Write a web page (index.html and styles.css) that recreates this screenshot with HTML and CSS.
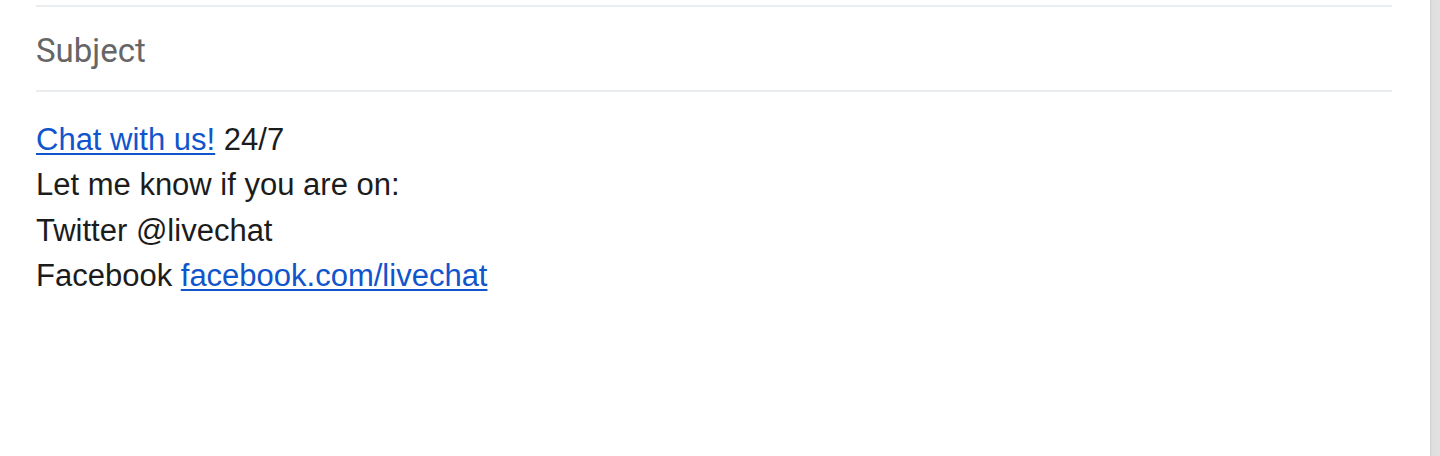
FILE: index.html
```html
<!DOCTYPE html>
<html lang="en">
<head>
	<meta charset="UTF-8">
	<title>Compose</title>
	<link rel="stylesheet" href="styles.css">
</head>
<body>
	<div class="page">
		<div class="compose">
			<div class="subject">Subject</div>
			<div class="message">
				<p><a href="#">Chat with us!</a> 24/7</p>
				<p>Let me know if you are on:</p>
				<p>Twitter @livechat</p>
				<p>Facebook <a href="#">facebook.com/livechat</a></p>
			</div>
		</div>
		<div class="scroll"></div>
	</div>
</body>
</html>
```

FILE: styles.css
```css
*{margin: 0;padding: 0;box-sizing: border-box;}
html,body {height: 100%;background: #fff;}
.page {display: flex;height: 456px;overflow: hidden;}
.compose {flex: 1;padding: 5px 38px 0 36px;}
.subject {height: 87px;padding-top: 4px;border-top: 2px solid #e9edf0;border-bottom: 2px solid #e9edf0;font-family: Roboto, "Noto Sans", sans-serif;font-size: 33px;color: #666;display: flex;align-items: center;}
.message {padding-top: 25px;font-family: "Liberation Sans", Arial, sans-serif;font-size: 31px;line-height: 45.3px;color: #1c1c1c;}
.message a {color: #1155cc;text-decoration: underline;text-underline-offset: 3px;text-decoration-thickness: 2px;}
.scroll {width: 10px;background: linear-gradient(to right, #cfcfcf 0, #dedede 2px, #e2e2e2 100%);}
```
